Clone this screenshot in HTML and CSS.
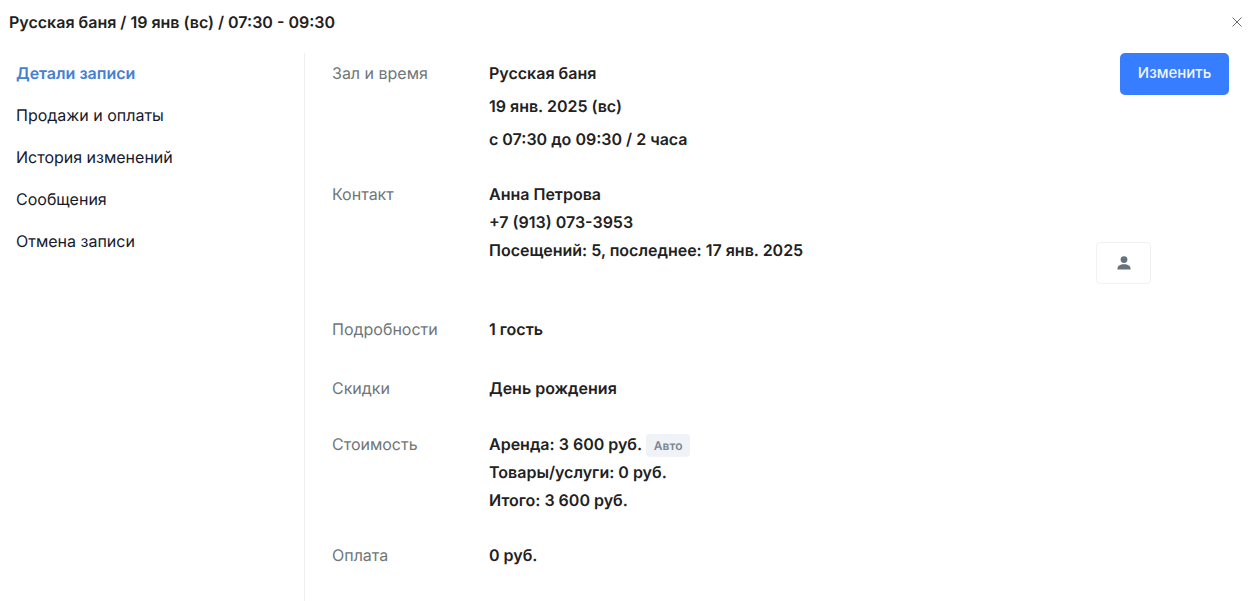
FILE: index.html
```html
<!DOCTYPE html>
<html lang="ru">
<head>
<meta charset="utf-8">
<meta name="viewport" content="width=device-width, initial-scale=1">
<title>Русская баня</title>
<link rel="stylesheet" href="styles.css">
</head>
<body>
<header class="header">
  <h1 class="title">Русская баня / 19 янв (вс) / 07:30 - 09:30</h1>
  <button class="close" type="button" aria-label="Закрыть">
    <svg width="10" height="10" viewBox="0 0 10 10" fill="none" stroke="#6b6b6b" stroke-width="1"><path d="M0.5 0.5l9 9M9.5 0.5l-9 9"/></svg>
  </button>
</header>
<div class="layout">
  <nav class="menu">
    <a class="menu-link active" href="#details">Детали записи</a>
    <a class="menu-link" href="#sales">Продажи и оплаты</a>
    <a class="menu-link" href="#history">История изменений</a>
    <a class="menu-link" href="#messages">Сообщения</a>
    <a class="menu-link" href="#cancel">Отмена записи</a>
  </nav>
  <main class="content" id="details">
    <dl class="details">
      <div class="row row-time">
        <dt>Зал и время</dt>
        <dd class="spaced"><p>Русская баня</p><p>19 янв. 2025 (вс)</p><p>с 07:30 до 09:30 / 2 часа</p></dd>
        <dd class="edit-cell"><button class="edit" type="button">Изменить</button></dd>
      </div>
      <div class="row row-contact">
        <dt>Контакт</dt>
        <dd><p>Анна Петрова</p><p>+7 (913) 073-3953</p><p>Посещений: 5, последнее: 17 янв. 2025</p></dd>
        <dd class="profile-cell">
          <button class="profile" type="button" aria-label="Профиль клиента">
            <svg width="14" height="14" viewBox="0 0 14 14" fill="#66727e"><circle cx="7" cy="3.6" r="3.4"/><path d="M0.500 13.500v-1C0.500 9.800 3 8.200 7 8.200s6.500 1.600 6.500 4.300v1z"/></svg>
          </button>
        </dd>
      </div>
      <div class="row row-extra"><dt>Подробности</dt><dd><p>1 гость</p></dd></div>
      <div class="row row-discount"><dt>Скидки</dt><dd><p>День рождения</p></dd></div>
      <div class="row row-price">
        <dt>Стоимость</dt>
        <dd><p>Аренда: 3 600 руб. <span class="badge">Авто</span></p><p>Товары/услуги: 0 руб.</p><p>Итого: 3 600 руб.</p></dd>
      </div>
      <div class="row row-payment"><dt>Оплата</dt><dd><p>0 руб.</p></dd></div>
    </dl>
  </main>
</div>
</body>
</html>
```
FILE: styles.css
```css
* { box-sizing: border-box; }
body {
  display: flex;
  flex-direction: column;
  min-height: 100vh;
  margin: 0;
  background: #fff;
  color: #212121;
  font: 16px/28px Inter, "Liberation Sans", sans-serif;
  text-rendering: geometricPrecision;
}
button { padding: 0; border: 0; font: inherit; cursor: pointer; }
p, dl, dd, h1 { margin: 0; }
.header {
  display: flex;
  align-items: center;
  justify-content: space-between;
  height: 44px;
  padding: 0 9px;
}
.title { font-size: 16px; font-weight: 600; }
.close { display: flex; background: none; }
.layout { display: flex; flex: 1; padding-top: 9px; }
.menu {
  display: flex;
  flex-direction: column;
  gap: 14px;
  width: 305px;
  padding: 6px 16px;
  border-right: 1px solid #eceef0;
}
.menu-link { color: #16192c; text-decoration: none; }
.menu-link.active { color: #4480d3; font-weight: 600; }
.content { flex: 1; padding: 0 22px 0 27px; }
.row { display: flex; margin-bottom: 28px; }
.row dt { width: 157px; color: #6f7678; }
.row dd { font-weight: 600; }
.row-time { margin-bottom: 27px; }
.row-time dt, .row-time .spaced { padding-top: 6px; }
.spaced { display: grid; gap: 5px; }
.edit-cell { margin-left: auto; }
.row-contact { margin-bottom: 31px; }
.row-extra { margin-bottom: 31px; }
.row-price { margin-bottom: 27px; }
.row-payment { margin-bottom: 0; }
.profile-cell { padding-top: 62px; margin: 0 78px 0 auto; }
.profile {
  display: flex;
  align-items: center;
  justify-content: center;
  width: 55px;
  height: 42px;
  border: 1px solid #f0f1f3;
  border-radius: 4px;
  background: #fff;
}
.badge {
  display: inline-block;
  padding: 0 8px;
  border-radius: 4px;
  background: #eff3f7;
  color: #7b8794;
  font-size: 12px;
  line-height: 23px;
}
.edit {
  display: block;
  width: 109px;
  height: 42px;
  padding-bottom: 2px;
  border-radius: 5px;
  background: #377dff;
  color: #f0f6ff;
  font-size: 15px;
  font-weight: 500;
}
```
